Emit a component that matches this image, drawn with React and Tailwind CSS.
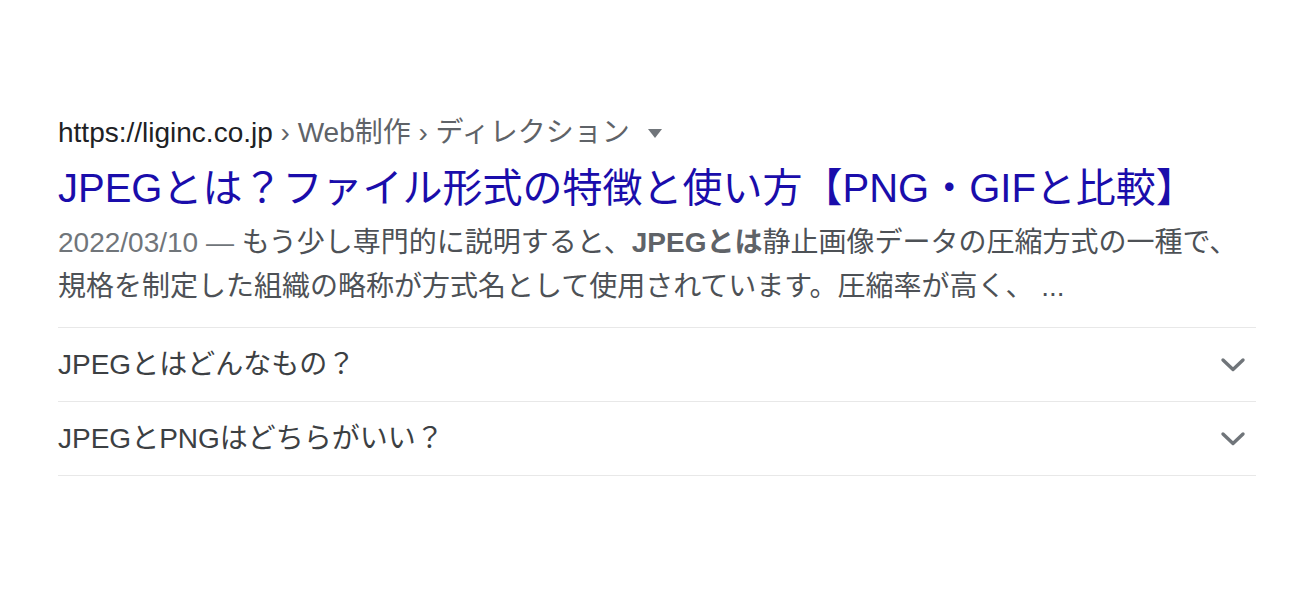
import React from 'react';

const faqs = ['JPEGとはどんなもの？', 'JPEGとPNGはどちらがいい？'];

const Chevron = () => (
  <svg width="26" height="16" viewBox="0 0 26 16" fill="none">
    <path d="M3 3 L13 12.5 L23 3" stroke="#70757a" strokeWidth="3.4" strokeLinecap="round" strokeLinejoin="round" />
  </svg>
);

const App = () => {
  return (
    <div className="min-h-[600px] bg-white font-['Liberation_Sans','Noto_Sans_CJK_JP',sans-serif]">
      <div className="ml-[58px] w-[1198px] pt-[111px]">
        {/* Breadcrumb */}
        <div className="flex items-center h-[44px] text-[28px] leading-[44px] whitespace-nowrap">
          <span className="text-[#202124]">https://liginc.co.jp</span>
          <span className="text-[#5f6368]">&nbsp;› Web制作 › ディレクション</span>
          <svg className="ml-[18px]" width="14" height="9" viewBox="0 0 14 9">
            <path d="M0 0 L14 0 L7 9 Z" fill="#70757a" />
          </svg>
        </div>

        {/* Title */}
        <h3 className="mt-[6px] text-[40px] leading-[54px] text-[#1a0dab] whitespace-nowrap">
          JPEGとは？ファイル形式の特徴と使い方【PNG・GIFと比較】
        </h3>

        {/* Snippet */}
        <div className="mt-[6px] text-[28px] leading-[44px] text-[#4d5156] whitespace-nowrap">
          <div>
            <span className="text-[#70757a]">2022/03/10 — </span>
            もう少し専門的に説明すると、<b className="text-[#5f6368]">JPEGとは</b>静止画像データの圧縮方式の一種で、
          </div>
          <div>規格を制定した組織の略称が方式名として使用されています。圧縮率が高く、 ...</div>
        </div>

        {/* Related questions */}
        <div className="mt-[18px] border-b border-[#e8e8e8]">
          {faqs.map((q) => (
            <div key={q} className="flex items-center justify-between h-[74px] border-t border-[#e8e8e8] text-[28px] text-[#3c4043]">
              <span>{q}</span>
              <span className="mr-[10px] flex items-center">
                <Chevron />
              </span>
            </div>
          ))}
        </div>
      </div>
    </div>
  );
};

export default App;
